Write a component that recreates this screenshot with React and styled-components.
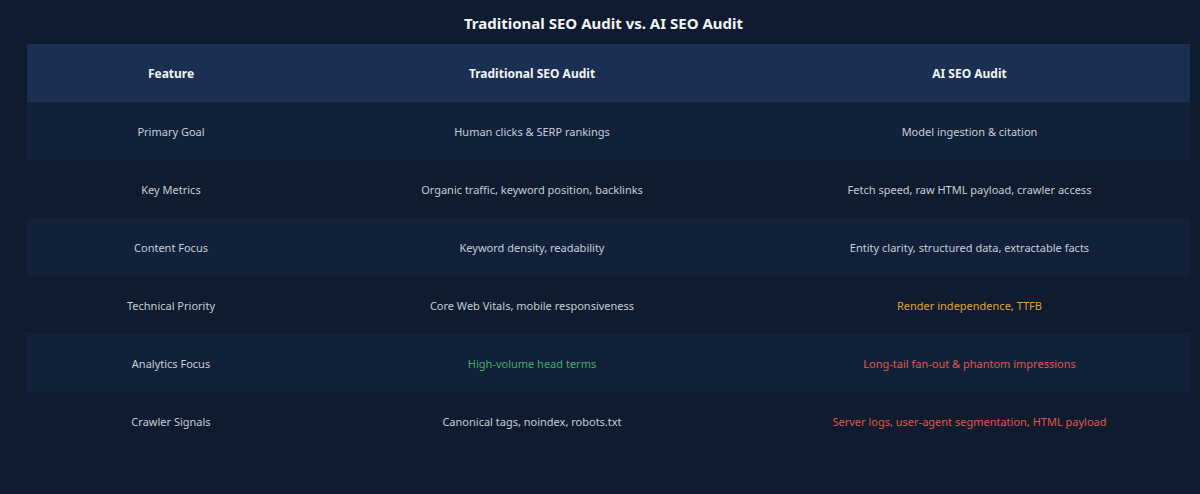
import styled, { createGlobalStyle } from "styled-components";

const Global = createGlobalStyle`
  body { margin: 0; background: #0f1b2e; font-family: "Noto Sans", "Open Sans", sans-serif; }
`;

const Page = styled.div`
  height: 494px;
  padding: 13px 10px 0 27px;
  box-sizing: border-box;
`;

const Title = styled.h2`
  margin: 0 0 11px;
  text-align: center;
  color: #f3f5f8;
  font-size: 15px;
  font-weight: 700;
  padding-right: 10px;
  line-height: 20px;
`;

const Table = styled.div`
  display: grid;
  grid-template-columns: 288px 434px 441px;
`;

const HeadCell = styled.div`
  height: 58px;
  display: flex;
  align-items: center;
  justify-content: center;
  background: #1a2f51;
  color: #f1f4f8;
  font-size: 12px;
  font-weight: 700;
`;

const Cell = styled.div`
  height: 58px;
  display: flex;
  align-items: center;
  justify-content: center;
  background: ${(p) => (p.$alt ? "#11213a" : "transparent")};
  color: ${(p) => ({ green: "#3fae6b", orange: "#e2a334", red: "#e2564c" }[p.$tone] || "#c5ceda")};
  font-size: 11px;
`;

const rows = [
  ["Primary Goal", "Human clicks & SERP rankings", "Model ingestion & citation"],
  ["Key Metrics", "Organic traffic, keyword position, backlinks", "Fetch speed, raw HTML payload, crawler access"],
  ["Content Focus", "Keyword density, readability", "Entity clarity, structured data, extractable facts"],
  ["Technical Priority", "Core Web Vitals, mobile responsiveness", ["Render independence, TTFB", "orange"]],
  ["Analytics Focus", ["High-volume head terms", "green"], ["Long-tail fan-out & phantom impressions", "red"]],
  ["Crawler Signals", "Canonical tags, noindex, robots.txt", ["Server logs, user-agent segmentation, HTML payload", "red"]],
];

export default function App() {
  return (
    <Page>
      <Global />
      <Title>Traditional SEO Audit vs. AI SEO Audit</Title>
      <Table>
        <HeadCell>Feature</HeadCell>
        <HeadCell>Traditional SEO Audit</HeadCell>
        <HeadCell>AI SEO Audit</HeadCell>
        {rows.map((r, i) =>
          r.map((c, j) => {
            const [text, tone] = Array.isArray(c) ? c : [c];
            return (
              <Cell key={`${i}-${j}`} $alt={i % 2 === 0} $tone={tone}>
                {text}
              </Cell>
            );
          })
        )}
      </Table>
    </Page>
  );
}
